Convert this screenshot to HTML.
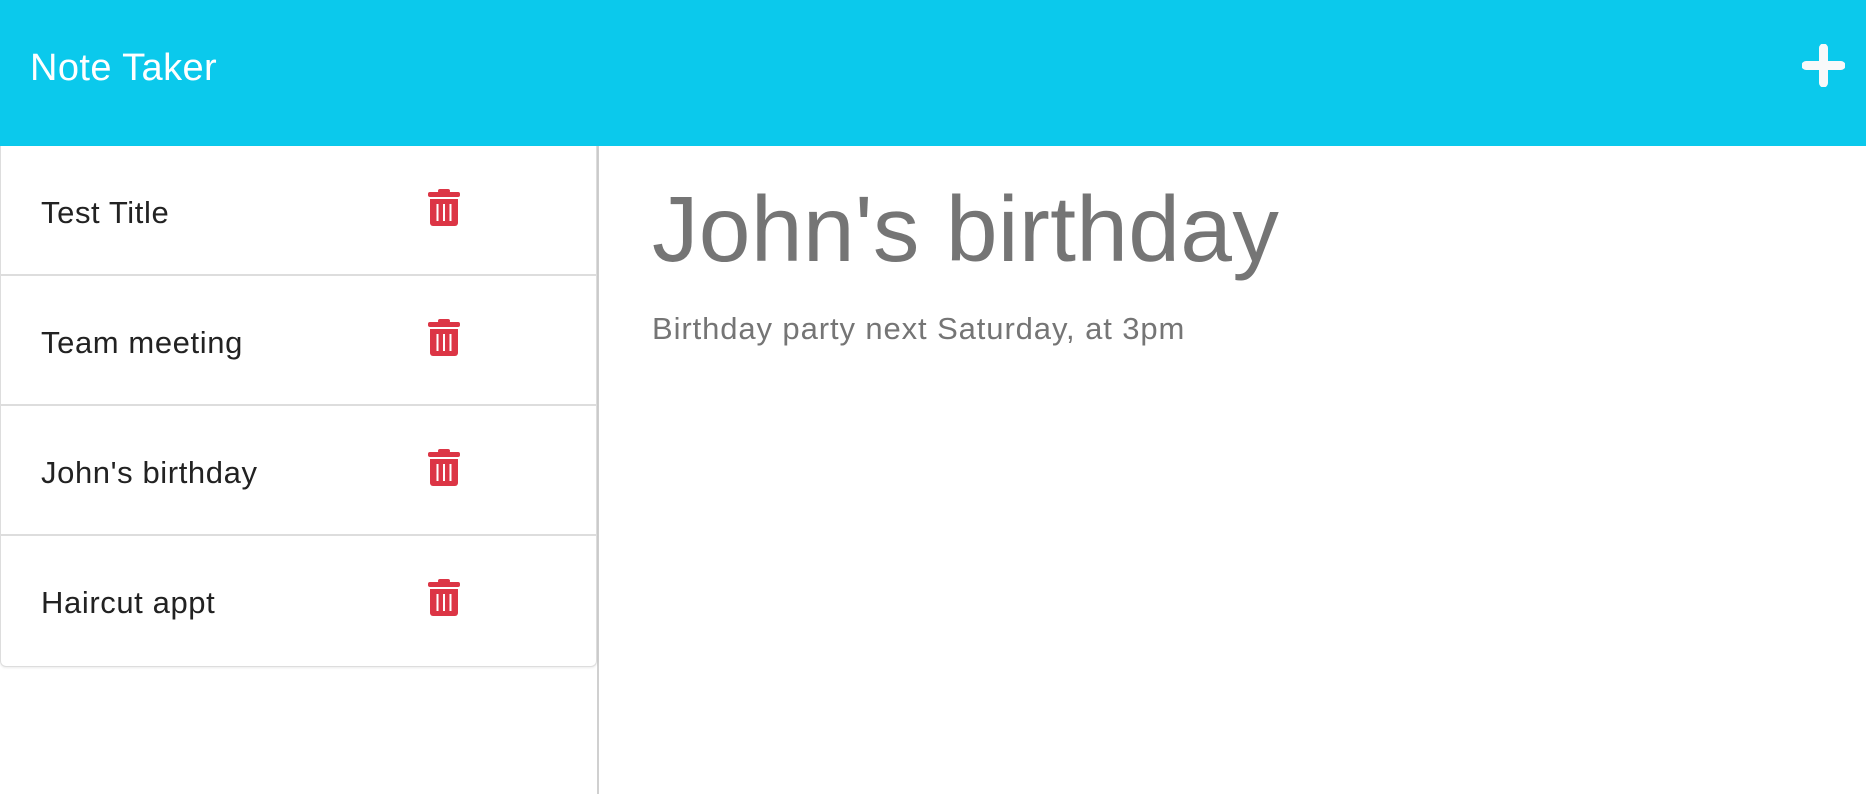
<!DOCTYPE html>
<html><head><style>
*{margin:0;padding:0;box-sizing:border-box}
body{width:1866px;height:794px;overflow:hidden;background:#fff;font-family:"Liberation Sans",sans-serif}
.hdr{height:146px;background:#0bc9ec;position:relative}
.hdr .t{position:absolute;left:30px;top:47px;font-size:38px;letter-spacing:0.4px;color:#fff}
.plus{position:absolute;left:1802px;top:44px}
.side{position:absolute;left:0;top:146px;width:599px;height:648px;border-right:2px solid #d0d0d0}
.list{border:1px solid #ddd;border-top:none;border-radius:0 0 6px 6px;box-shadow:0 1px 2px rgba(0,0,0,.08)}
.item{height:130px;border-bottom:2px solid #ddd;position:relative}
.item:last-child{border-bottom:none}
.item span{position:absolute;left:40px;top:49px;font-size:31px;letter-spacing:0.6px;color:#222}
.item svg{position:absolute;left:427px;top:43px}
.main{position:absolute;left:652px;top:174px;color:#757575}
.main h1{font-weight:normal;font-size:93px;line-height:110px;letter-spacing:0.3px}
.main p{font-size:31px;margin-top:27px;letter-spacing:0.9px}
</style></head><body>
<div class="hdr"><div class="t">Note Taker</div>
<svg class="plus" width="43" height="43" viewBox="0 0 43 43"><path d="M21.5 4V39M4 21.5H39" stroke="#f8f9fa" stroke-width="9" stroke-linecap="round"/></svg></div>
<div class="side"><div class="list">
<div class="item"><span>Test Title</span><svg width="32" height="37" viewBox="0 0 32 37"><rect x="10" y="0" width="12" height="4" rx="2" fill="#dc3545"/><rect x="0" y="3" width="32" height="5" rx="2" fill="#dc3545"/><path d="M2 10H30V34a3 3 0 0 1-3 3H5a3 3 0 0 1-3-3Z" fill="#dc3545"/><path d="M9.5 15V32M16 15V32M22.5 15V32" stroke="#fff" stroke-width="2"/></svg></div>
<div class="item"><span>Team meeting</span><svg width="32" height="37" viewBox="0 0 32 37"><rect x="10" y="0" width="12" height="4" rx="2" fill="#dc3545"/><rect x="0" y="3" width="32" height="5" rx="2" fill="#dc3545"/><path d="M2 10H30V34a3 3 0 0 1-3 3H5a3 3 0 0 1-3-3Z" fill="#dc3545"/><path d="M9.5 15V32M16 15V32M22.5 15V32" stroke="#fff" stroke-width="2"/></svg></div>
<div class="item"><span>John's birthday</span><svg width="32" height="37" viewBox="0 0 32 37"><rect x="10" y="0" width="12" height="4" rx="2" fill="#dc3545"/><rect x="0" y="3" width="32" height="5" rx="2" fill="#dc3545"/><path d="M2 10H30V34a3 3 0 0 1-3 3H5a3 3 0 0 1-3-3Z" fill="#dc3545"/><path d="M9.5 15V32M16 15V32M22.5 15V32" stroke="#fff" stroke-width="2"/></svg></div>
<div class="item"><span>Haircut appt</span><svg width="32" height="37" viewBox="0 0 32 37"><rect x="10" y="0" width="12" height="4" rx="2" fill="#dc3545"/><rect x="0" y="3" width="32" height="5" rx="2" fill="#dc3545"/><path d="M2 10H30V34a3 3 0 0 1-3 3H5a3 3 0 0 1-3-3Z" fill="#dc3545"/><path d="M9.5 15V32M16 15V32M22.5 15V32" stroke="#fff" stroke-width="2"/></svg></div>
</div></div>
<div class="main"><h1>John's birthday</h1><p>Birthday party next Saturday, at 3pm</p></div>
</body></html>
